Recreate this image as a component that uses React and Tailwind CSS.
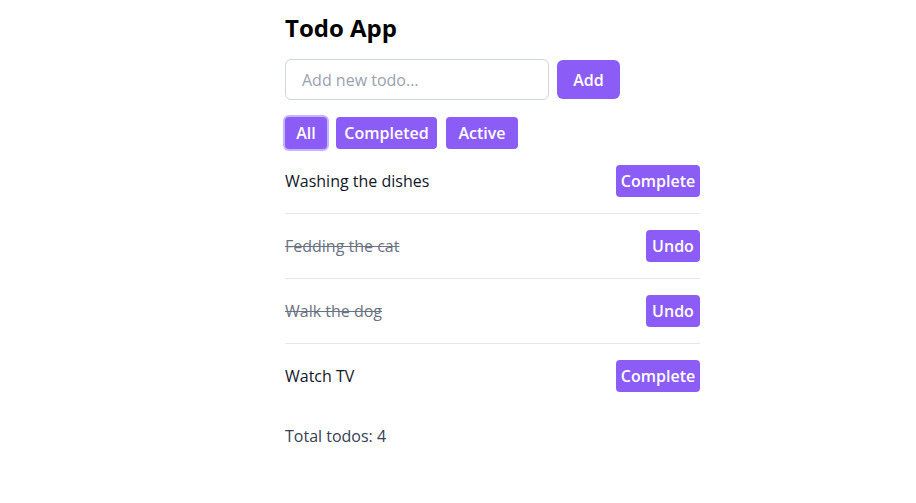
import React from "react";

const todos = [
  { text: "Washing the dishes", done: false },
  { text: "Fedding the cat", done: true },
  { text: "Walk the dog", done: true },
  { text: "Watch TV", done: false },
];

export default function App() {
  return (
    <div className="min-h-[503px] bg-white pl-[285px] pt-[12px] font-['Comic_Sans_MS','Open_Sans',sans-serif]">
      <div className="w-[415px]">
        <h1 className="text-[24px] font-bold leading-[32px] text-black">Todo App</h1>
        <div className="mt-[15px] flex items-center gap-[8px]">
          <input
            className="h-[41px] w-[264px] rounded-[6px] border border-gray-300 px-[16px] text-[16px] text-gray-700 placeholder:text-gray-400 outline-none"
            placeholder="Add new todo..."
          />
          <button className="h-[39px] w-[63px] rounded-[6px] bg-[#8b5cf6] text-[16px] font-semibold text-white">
            Add
          </button>
        </div>
        <div className="mt-[17px] flex items-center gap-[9px]">
          <button className="h-[32px] w-[42px] rounded-[4px] bg-[#8b5cf6] text-[16px] font-semibold text-white ring-2 ring-[#c4b5fd]">
            All
          </button>
          <button className="h-[32px] w-[101px] rounded-[4px] bg-[#8b5cf6] text-[16px] font-semibold text-white">
            Completed
          </button>
          <button className="h-[32px] w-[72px] rounded-[4px] bg-[#8b5cf6] text-[16px] font-semibold text-white">
            Active
          </button>
        </div>
        <ul>
          {todos.map((t, i) => (
            <li
              key={t.text}
              className={`flex items-center justify-between py-[16px] ${i < todos.length - 1 ? "border-b border-gray-200" : ""}`}
            >
              <span
                className={`text-[16px] ${t.done ? "text-gray-500 line-through" : "text-gray-900"}`}
              >
                {t.text}
              </span>
              <button
                className={`h-[32px] rounded-[4px] bg-[#8b5cf6] text-[16px] font-semibold text-white ${t.done ? "w-[54px]" : "w-[84px]"}`}
              >
                {t.done ? "Undo" : "Complete"}
              </button>
            </li>
          ))}
        </ul>
        <p className="mt-[16px] text-[16px] leading-[24px] text-gray-700">Total todos: 4</p>
      </div>
    </div>
  );
}
